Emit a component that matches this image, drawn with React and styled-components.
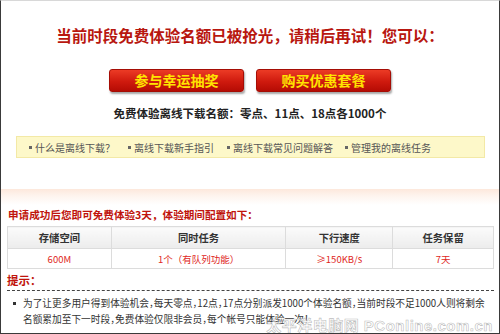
import React from 'react';
import styled, { createGlobalStyle } from 'styled-components';

const Global = createGlobalStyle`
    html, body {
        margin: 0;
        padding: 0;
        background: #fff;
    }
    * {
        box-sizing: border-box;
    }
`;

const Frame = styled.div`
    position: relative;
    width: 500px;
    height: 334px;
    overflow: hidden;
    border: 1px solid #3a3a3a;
    border-top-color: #d8d8d8;
    font-family: "Noto Sans CJK SC", "Noto Sans", sans-serif;
    font-size: 12px;
    color: #333;
    background: #fff;
    `;

const Top = styled.div`
    display: flex;
    flex-direction: column;
    align-items: center;
    padding-top: 24px;
    height: 188px;
    `;

const Title = styled.h1`
    margin: 0;
    font-size: 15.5px;
    line-height: 20px;
    font-weight: 700;
    color: #b8170f;
    `;

const Buttons = styled.div`
    display: flex;
    gap: 12px;
    margin-top: 24px;
    `;

const Btn = styled.button`
    width: 135px;
    height: 23px;
    padding: 0;
    border: 1px solid #a50d05;
    border-radius: 3px;
    background: linear-gradient(#ec3b25, #cf1a0e 55%, #b50c04);
    box-shadow: 1px 2px 2px rgba(0, 0, 0, 0.35);
    color: #ffe400;
    font-family: inherit;
    font-size: 14px;
    font-weight: 700;
    line-height: 21px;
    cursor: pointer;
    `;

const Quota = styled.p`
    margin: 13px 0 0;
    font-size: 11.5px;
    font-weight: 700;
    line-height: 16px;
    color: #222;
    `;

const LinkBar = styled.ul`
    display: flex;
    align-self: stretch;
    margin: 15px 14px 0 15px;
    padding: 0 0 0 12px;
    height: 22px;
    list-style: none;
    align-items: center;
    background: #fdf8c9;
    border: 1px solid #f3e9a6;
    `;

const LinkItem = styled.li`
    display: flex;
    flex: none;
    align-items: center;
    width: ${p => p.w}px;
    color: #555;
    font-size: 10px;
    white-space: nowrap;
    &::before {
        content: '';
        width: 3px;
        height: 3px;
        margin-right: 3px;
        background: #666;
    }
    `;

const Lower = styled.div`
    padding: 12px 5px 0 6px;
    height: 145px;
    background: linear-gradient(#fde8dc 0px, #fef4ee 7px, #fff 16px);
    `;

const RedHead = styled.h3`
    margin: 7px 0 0 1px;
    font-size: 10.6px;
    line-height: 14px;
    font-weight: 700;
    color: #c0140c;
    `;

const Table = styled.table`
    width: 487px;
    margin-top: 4px;
    border-collapse: collapse;
    font-size: 10.3px;
    `;

const Th = styled.th`
    height: 22px;
    padding: 0;
    border: 1px solid #dcdcdc;
    background: linear-gradient(#fbfbfb, #ececec);
    color: #333;
    font-weight: 700;
    `;

const Td = styled.td`
    height: 20px;
    padding: 0;
    border: 1px solid #dcdcdc;
    text-align: center;
    color: #e0271c;
    font-size: 9.5px;
    `;

const TipHead = styled.div`
    margin-top: 3px;
    padding-bottom: 2px;
    border-bottom: 1px dashed #444;
    font-size: 11.5px;
    font-weight: 700;
    line-height: 16px;
    color: #c0140c;
    `;

const TipList = styled.ul`
    margin: 4px 0 0;
    padding: 0 0 0 16px;
    list-style: none;
    `;

const Tip = styled.li`
    position: relative;
    line-height: 16px;
    color: #333;
    font-size: 9.7px;
    font-feature-settings: "halt";
    &::before {
        content: '';
        position: absolute;
        left: -10px;
        top: 7px;
        width: 3px;
        height: 3px;
        background: #333;
    }
    `;

const TipLine = styled.span`
    display: block;
    white-space: nowrap;
    `;

const Watermark = styled.div`
    position: absolute;
    right: 6px;
    bottom: -2px;
    font-family: "Liberation Sans", "Noto Sans CJK SC", sans-serif;
    font-size: 15px;
    font-weight: 700;
    color: rgba(255, 255, 255, 0.6);
    -webkit-text-stroke: 0.6px rgba(120, 120, 120, 0.5);
    letter-spacing: 0.5px;
    pointer-events: none;
    `;

const links = [
    { text: '什么是离线下载？', w: 99 },
    { text: '离线下载新手指引', w: 99 },
    { text: '离线下载常见问题解答', w: 118 },
    { text: '管理我的离线任务', w: 110 },
];

function App() {
    return (
        <>
            <Global />
            <Frame>
                <Top>
                    <Title>当前时段免费体验名额已被抢光，请稍后再试！您可以：</Title>
                    <Buttons>
                        <Btn>参与幸运抽奖</Btn>
                        <Btn>购买优惠套餐</Btn>
                    </Buttons>
                    <Quota>免费体验离线下载名额：零点、11点、18点各1000个</Quota>
                    <LinkBar>
                        {links.map(l => (
                            <LinkItem key={l.text} w={l.w}>{l.text}</LinkItem>
                        ))}
                    </LinkBar>
                </Top>
                <Lower>
                    <RedHead>申请成功后您即可免费体验3天，体验期间配置如下：</RedHead>
                    <Table>
                        <colgroup>
                            <col style={{ width: 104 }} />
                            <col style={{ width: 175 }} />
                            <col style={{ width: 107 }} />
                            <col style={{ width: 101 }} />
                        </colgroup>
                        <thead>
                            <tr>
                                <Th>存储空间</Th>
                                <Th>同时任务</Th>
                                <Th>下行速度</Th>
                                <Th>任务保留</Th>
                            </tr>
                        </thead>
                        <tbody>
                            <tr>
                                <Td>600M</Td>
                                <Td>1个（有队列功能）</Td>
                                <Td>≥150KB/s</Td>
                                <Td>7天</Td>
                            </tr>
                        </tbody>
                    </Table>
                    <TipHead>提示：</TipHead>
                    <TipList>
                        <Tip>
                            <TipLine>为了让更多用户得到体验机会，每天零点，12点，17点分别派发1000个体验名额，当前时段不足1000人则将剩余</TipLine>
                            <TipLine>名额累加至下一时段，免费体验仅限非会员，每个帐号只能体验一次！</TipLine>
                        </Tip>
                    </TipList>
                </Lower>
                <Watermark>太平洋电脑网 PConline.com.cn</Watermark>
            </Frame>
        </>
    );
}

export default App;
